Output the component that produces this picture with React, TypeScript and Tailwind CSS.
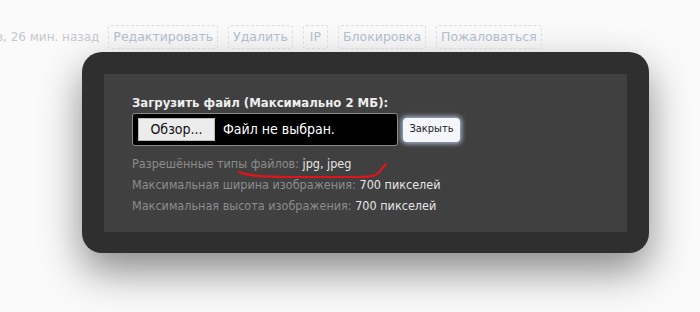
import React from 'react'

const actions = ['Редактировать', 'Удалить', 'IP', 'Блокировка', 'Пожаловаться']

const limits = [
  { label: 'Разрешённые типы файлов:', value: 'jpg, jpeg' },
  { label: 'Максимальная ширина изображения:', value: '700 пикселей' },
  { label: 'Максимальная высота изображения:', value: '700 пикселей' },
]

export default function App() {
  return (
    <div
      className="w-[700px] h-[312px] overflow-hidden bg-[#fafafb] relative"
      style={{ fontFamily: '"DejaVu Sans", Verdana, sans-serif' }}
    >
      {/* post footer behind the dialog */}
      <div className="flex items-center h-[24px] mt-[25px] ml-[-4px] text-[12.5px] opacity-80">
        <span className="text-[#b9bcc2] text-[12px] mr-[9px]">в, 26 мин. назад</span>
        {actions.map((a) => (
          <span
            key={a}
            className={`h-[24px] mr-[10px] flex items-center border border-dashed border-[#d3d8de] rounded-[3px] text-[#9fb0c3] ${
              a === 'IP' ? 'px-[6px]' : 'px-[4px]'
            }`}
          >
            {a}
          </span>
        ))}
      </div>

      {/* upload dialog */}
      <div className="ml-[82px] mt-[3px] w-[567px] h-[201px] bg-[#2f2f2f] rounded-[20px] p-[22px] shadow-[0_18px_40px_rgba(0,0,0,0.45)]">
        <div
          className="relative h-[158px] bg-[#404040] pl-[28px] pt-[21px]"
          style={{ fontFamily: '"DejaVu Sans Condensed", "DejaVu Sans", sans-serif' }}
        >
          <div className="text-[13px] font-bold text-[#eeeeee] leading-[16px]">
            Загрузить файл (Максимально 2 МБ):
          </div>
          <div className="flex items-center mt-[2px]">
            <div className="w-[266px] h-[33px] bg-black border border-[#8a8a8a] rounded-[3px] flex items-center pl-[5px]">
              <span className="h-[23px] w-[77px] bg-[#ececec] border border-[#bdbdbd] flex items-center justify-center text-[14px] text-[#111]">
                Обзор...
              </span>
              <span className="ml-[8px] text-[14px] text-white">Файл не выбран.</span>
            </div>
            <button className="ml-[5px] h-[24px] w-[57px] bg-[#f4f6fa] rounded-[4px] text-[11px] text-[#222] shadow-[0_0_4px_2px_rgba(200,220,255,0.7)]">
              Закрыть
            </button>
          </div>
          <div className="mt-[10px] flex flex-col gap-[6px] text-[12.5px] leading-[15px]">
            {limits.map((l) => (
              <div key={l.label}>
                <span className="text-[#8c8c8c]">{l.label}</span>{' '}
                <span className="text-[#e6e6e6]">{l.value}</span>
              </div>
            ))}
          </div>

          {/* red marker scribble */}
          <svg className="absolute left-0 top-0 pointer-events-none" width="523" height="158" viewBox="104 74 523 158">
            <path
              d="M239 172 C248 176, 262 177, 290 177 L358 177 C370 177, 377 176, 380 171 L386 164"
              fill="none"
              stroke="#e2141a"
              strokeWidth="2.2"
              strokeLinecap="round"
            />
          </svg>
        </div>
      </div>
    </div>
  )
}
